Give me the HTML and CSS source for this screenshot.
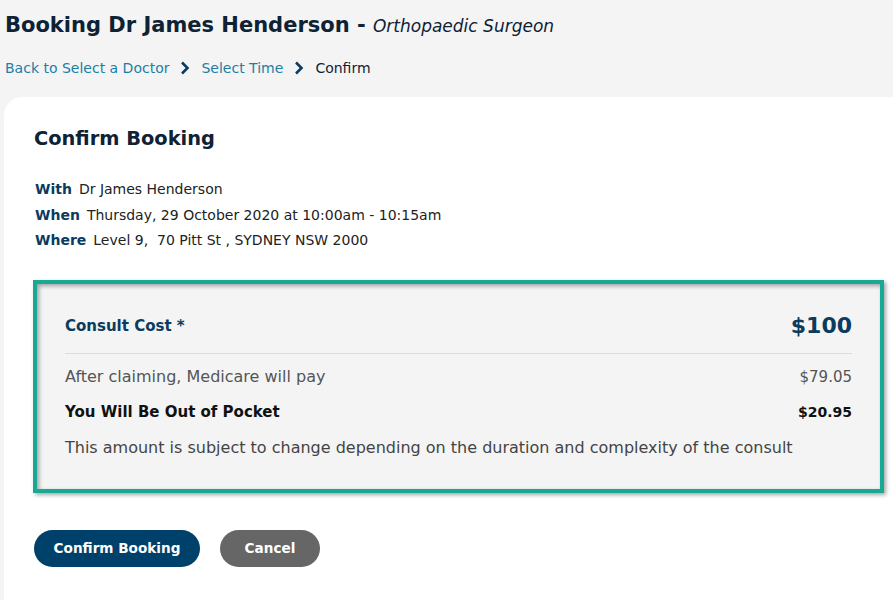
FILE: index.html
```html
<!DOCTYPE html>
<html lang="en">
<head>
<meta charset="utf-8">
<title>Confirm Booking</title>
<link rel="stylesheet" href="styles.css">
</head>
<body>
<header class="page-head">
  <h1 class="title">Booking Dr James Henderson - <span class="specialty">Orthopaedic Surgeon</span></h1>
  <nav class="crumbs">
    <a class="crumb-link" href="#">Back to Select a Doctor</a>
    <svg class="chev" width="10" height="14" viewBox="0 0 10 14"><path d="M2 1.5 L7.5 7 L2 12.5" fill="none" stroke="#0b3b5e" stroke-width="2.6"/></svg>
    <a class="crumb-link" href="#">Select Time</a>
    <svg class="chev" width="10" height="14" viewBox="0 0 10 14"><path d="M2 1.5 L7.5 7 L2 12.5" fill="none" stroke="#0b3b5e" stroke-width="2.6"/></svg>
    <span class="crumb-current">Confirm</span>
  </nav>
</header>
<main class="card">
  <h2 class="card-title">Confirm Booking</h2>
  <dl class="details">
    <div class="detail"><dt>With</dt><dd>Dr James Henderson</dd></div>
    <div class="detail"><dt>When</dt><dd>Thursday, 29 October 2020 at 10:00am - 10:15am</dd></div>
    <div class="detail"><dt>Where</dt><dd>Level 9,&nbsp; 70 Pitt St , SYDNEY NSW 2000</dd></div>
  </dl>
  <section class="cost">
    <div class="cost-head">
      <span class="cost-label">Consult Cost *</span>
      <span class="cost-total">$100</span>
    </div>
    <div class="cost-row muted">
      <span>After claiming, Medicare will pay</span>
      <span class="num">$79.05</span>
    </div>
    <div class="cost-row strong">
      <span>You Will Be Out of Pocket</span>
      <span class="num-strong">$20.95</span>
    </div>
    <p class="cost-note">This amount is subject to change depending on the duration and complexity of the consult</p>
  </section>
  <div class="actions">
    <button class="btn btn-primary">Confirm Booking</button>
    <button class="btn btn-secondary">Cancel</button>
  </div>
</main>
</body>
</html>
```
FILE: styles.css
```css
* { box-sizing: border-box; }
html, body { margin: 0; padding: 0; }
body {
  background: #f4f4f4;
  font-family: "DejaVu Sans", "Open Sans", sans-serif;
  color: #0e2235;
  height: 600px;
  overflow: hidden;
}
.page-head { padding: 10px 0 0 5px; }
.title {
  margin: 0;
  font-size: 21px;
  line-height: 30px;
  font-weight: 700;
  color: #0e2235;
}
.specialty {
  font-size: 17px;
  font-weight: 400;
  font-style: italic;
  color: #0e2235;
}
.crumbs {
  display: flex;
  align-items: center;
  gap: 9px;
  margin-top: 17px;
  height: 20px;
  font-size: 14px;
}
.crumb-link { color: #1b7fa6; text-decoration: none; }
.crumb-current { color: #0e2235; }
.chev { display: block; margin: 0 2px; }
.card {
  margin: 19px 0 0 4px;
  background: #fff;
  border-top-left-radius: 18px;
  padding: 27px 9px 40px 30px;
  height: 510px;
}
.card-title {
  margin: 0;
  font-size: 19.4px;
  line-height: 30px;
  font-weight: 700;
  color: #0e2235;
}
.details { margin: 23px 0 0 1px; }
.detail { display: flex; gap: 7px; font-size: 14px; line-height: 25.5px; }
.detail dt { font-weight: 700; color: #0b3b5e; }
.detail dd { margin: 0; color: #222; }
.cost {
  margin-top: 26px;
  margin-left: -1px;
  border: 4px solid #17a994;
  background: #f4f4f4;
  box-shadow: inset 2px 2px 4px rgba(0,0,0,0.35), 2px 2px 4px rgba(0,0,0,0.35);
  padding: 25px 28px 30px 28px;
  width: 851px;
}
.cost-head {
  display: flex;
  justify-content: space-between;
  align-items: center;
  padding-bottom: 10px;
  border-bottom: 1px solid #dcdcdc;
  height: 45px;
}
.cost-label { font-size: 15px; font-weight: 700; color: #0b3b5e; }
.cost-total { font-size: 22px; font-weight: 700; color: #0b3b5e; }
.cost-row {
  display: flex;
  justify-content: space-between;
  align-items: baseline;
  line-height: 22px;
}
.muted { color: #555; margin-top: 12px; font-size: 16px; }
.num { font-size: 15px; }
.strong { color: #111; font-weight: 700; margin-top: 13px; font-size: 15px; }
.num-strong { font-size: 14px; }
.cost-note { margin: 14px 0 0; font-size: 16px; line-height: 22px; color: #444; }
.actions { display: flex; gap: 20px; margin-top: 37px; margin-left: 0; }
.btn {
  font-family: inherit;
  border: none;
  border-radius: 19px;
  height: 37px;
  font-size: 13.6px;
  font-weight: 700;
  color: #fff;
  padding: 0 12px;
}
.btn-primary { background: #00416b; width: 166px; }
.btn-secondary { background: #666; width: 100px; }
```
